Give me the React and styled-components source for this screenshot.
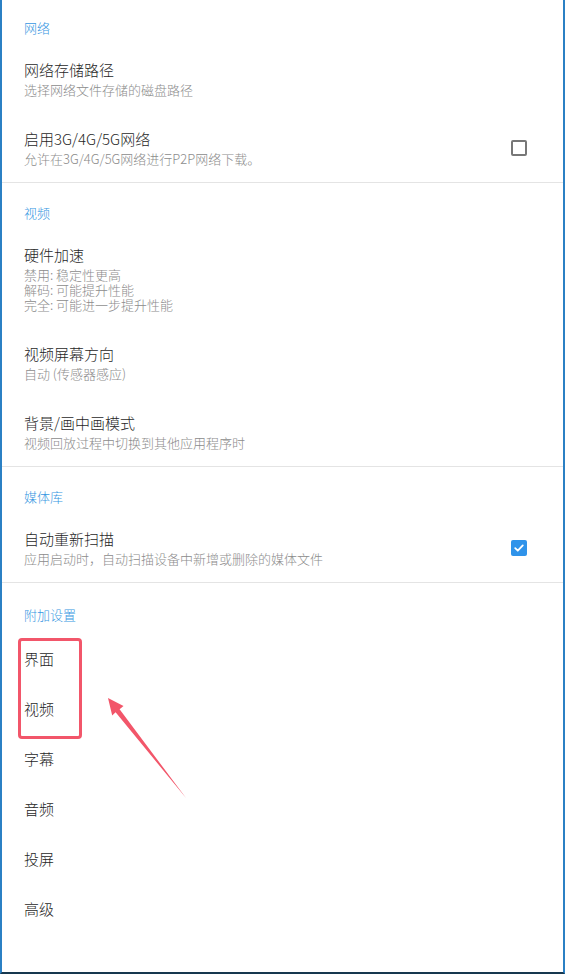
import styled, { createGlobalStyle } from 'styled-components';

const GlobalStyle = createGlobalStyle`
    * { box-sizing: border-box; }
    body {
        margin: 0;
        background: #fff;
        font-family: "Noto Sans CJK SC", "Noto Sans", sans-serif;
        font-weight: 300;
    }
`;

const settings = [
    {
        title: '网络',
        headTop: 20,
        items: [
            { title: '网络存储路径', sub: ['选择网络文件存储的磁盘路径'] },
            { title: '启用3G/4G/5G网络', sub: ['允许在3G/4G/5G网络进行P2P网络下载。'], check: false },
        ],
    },
    {
        title: '视频',
        items: [
            { title: '硬件加速', sub: ['禁用: 稳定性更高', '解码: 可能提升性能', '完全: 可能进一步提升性能'] },
            { title: '视频屏幕方向', sub: ['自动 (传感器感应)'] },
            { title: '背景/画中画模式', sub: ['视频回放过程中切换到其他应用程序时'] },
        ],
    },
    {
        title: '媒体库',
        items: [
            { title: '自动重新扫描', sub: ['应用启动时，自动扫描设备中新增或删除的媒体文件'], check: true },
        ],
    },
];

const extras = ['界面', '视频', '字幕', '音频', '投屏', '高级'];

export default function App() {
    return (
        <>
            <GlobalStyle />
            <Page>
                {settings.map((section) => (
                    <Section key={section.title}>
                        <SectionTitle $top={section.headTop}>{section.title}</SectionTitle>
                        {section.items.map((item) => (
                            <Row key={item.title}>
                                <RowText>
                                    <RowTitle>{item.title}</RowTitle>
                                    <RowSub>
                                        {item.sub.map((line) => (
                                            <div key={line}>{line}</div>
                                        ))}
                                    </RowSub>
                                </RowText>
                                {item.check !== undefined && <Checkbox $checked={item.check} />}
                            </Row>
                        ))}
                    </Section>
                ))}
                <Section $last>
                    <SectionTitle $top={24}>附加设置</SectionTitle>
                    <LinkList>
                        {extras.map((name) => (
                            <LinkRow key={name}>{name}</LinkRow>
                        ))}
                    </LinkList>
                </Section>

                <Highlight />
                <Arrow viewBox="0 0 565 974">
                    <polygon
                        points="108,698 123.5,706 119.6,709.3 186,798 115.6,712.3 112.2,715.5"
                        fill="#f2566a"
                    />
                </Arrow>
            </Page>
        </>
    );
}

function Checkbox({ $checked }) {
    return (
        <Box $checked={$checked}>
            {$checked && (
                <svg width="12" height="12" viewBox="0 0 12 12">
                    <path d="M2.2 6.2 L4.8 8.7 L9.8 3.4" fill="none" stroke="#fff" strokeWidth="1.8" strokeLinecap="round" strokeLinejoin="round" />
                </svg>
            )}
        </Box>
    );
}

const Page = styled.div`
    position: relative;
    width: 565px;
    height: 974px;
    border-left: 2px solid #2b80c4;
    border-right: 2px solid #2b80c4;
    border-bottom: 2px solid #17384f;
    overflow: hidden;
`;

const Section = styled.section`
    border-bottom: ${(p) => (p.$last ? 'none' : '1px solid #e4e4e4')};
`;

const SectionTitle = styled.div`
    padding: ${(p) => p.$top ?? 22}px 22px 8px;
    font-size: 13px;
    line-height: 16px;
    color: #3797e2;
`;

const Row = styled.div`
    display: flex;
    align-items: center;
    padding: 16px 36px 16px 22px;
`;

const RowText = styled.div`
    flex: 1;
`;

const RowTitle = styled.div`
    font-size: 15px;
    line-height: 20px;
    color: #1f1f1f;
`;

const RowSub = styled.div`
    padding-top: 2px;
    font-size: 13px;
    line-height: 15px;
    color: #8c8c8c;
`;

const Box = styled.div`
    width: 16px;
    height: 16px;
    border-radius: 2px;
    display: flex;
    align-items: center;
    justify-content: center;
    background: ${(p) => (p.$checked ? '#2f93ea' : 'transparent')};
    border: ${(p) => (p.$checked ? 'none' : '2px solid #777')};
`;

const LinkList = styled.div`
    padding-top: 2px;
`;

const LinkRow = styled.div`
    height: 50px;
    display: flex;
    align-items: center;
    padding-left: 22px;
    font-size: 15px;
    color: #1f1f1f;
`;

const Highlight = styled.div`
    position: absolute;
    left: 16px;
    top: 638px;
    width: 64px;
    height: 101px;
    border: 3px solid #f2566a;
    border-radius: 4px;
    pointer-events: none;
`;

const Arrow = styled.svg`
    position: absolute;
    left: -2px;
    top: 0;
    width: 565px;
    height: 974px;
    pointer-events: none;
`;
